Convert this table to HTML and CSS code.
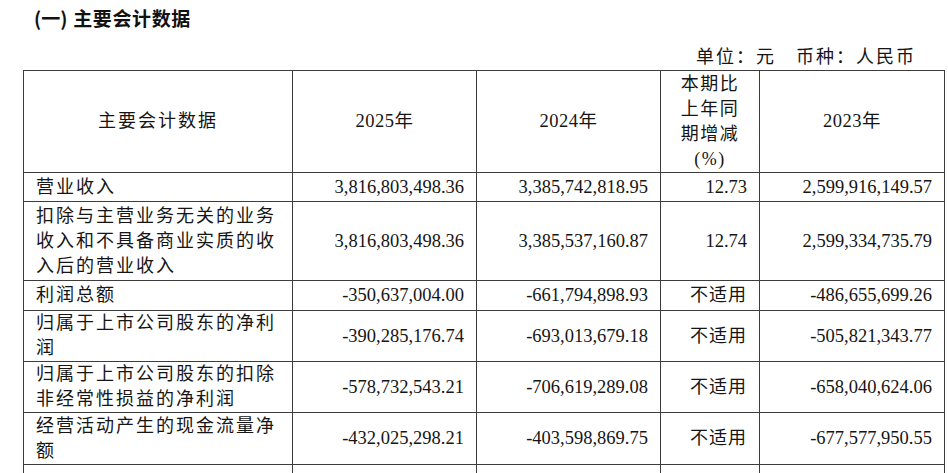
FILE: index.html
```html
<!DOCTYPE html>
<html lang="zh-CN">
<head>
<meta charset="utf-8">
<title>主要会计数据</title>
<link rel="stylesheet" href="styles.css">
</head>
<body>
<div class="page">
  <h2 class="title"><span class="paren">(一)</span> 主要会计数据</h2>
  <div class="unit">单位：元　币种：人民币</div>
  <table class="data">
    <colgroup>
      <col class="c-name">
      <col class="c-num">
      <col class="c-num">
      <col class="c-pct">
      <col class="c-num2">
    </colgroup>
    <thead>
      <tr class="head">
        <th class="zh">主要会计数据</th>
        <th>2025年</th>
        <th>2024年</th>
        <th class="pct-head">本期比<br>上年同<br>期增减<br>(%)</th>
        <th>2023年</th>
      </tr>
    </thead>
    <tbody>
      <tr class="r28">
        <td class="name">营业收入</td>
        <td class="num">3,816,803,498.36</td>
        <td class="num">3,385,742,818.95</td>
        <td class="num">12.73</td>
        <td class="num">2,599,916,149.57</td>
      </tr>
      <tr class="r78">
        <td class="name">扣除与主营业务无关的业务收入和不具备商业实质的收入后的营业收入</td>
        <td class="num">3,816,803,498.36</td>
        <td class="num">3,385,537,160.87</td>
        <td class="num">12.74</td>
        <td class="num">2,599,334,735.79</td>
      </tr>
      <tr class="r29">
        <td class="name">利润总额</td>
        <td class="num">-350,637,004.00</td>
        <td class="num">-661,794,898.93</td>
        <td class="num na">不适用</td>
        <td class="num">-486,655,699.26</td>
      </tr>
      <tr class="r51">
        <td class="name">归属于上市公司股东的净利润</td>
        <td class="num">-390,285,176.74</td>
        <td class="num">-693,013,679.18</td>
        <td class="num na">不适用</td>
        <td class="num">-505,821,343.77</td>
      </tr>
      <tr class="r51">
        <td class="name">归属于上市公司股东的扣除非经常性损益的净利润</td>
        <td class="num">-578,732,543.21</td>
        <td class="num">-706,619,289.08</td>
        <td class="num na">不适用</td>
        <td class="num">-658,040,624.06</td>
      </tr>
      <tr class="r52">
        <td class="name">经营活动产生的现金流量净额</td>
        <td class="num">-432,025,298.21</td>
        <td class="num">-403,598,869.75</td>
        <td class="num na">不适用</td>
        <td class="num">-677,577,950.55</td>
      </tr>
      <tr class="r52">
        <td class="name"></td>
        <td class="num"></td>
        <td class="num"></td>
        <td class="num"></td>
        <td class="num"></td>
      </tr>
    </tbody>
  </table>
</div>
</body>
</html>
```

FILE: styles.css
```css
html, body {
  margin: 0;
  padding: 0;
  background: #ffffff;
}

body {
  color: #151515;
  font-family: "Liberation Serif", "Noto Sans CJK SC", serif;
}

.page {
  padding-left: 23px;
  width: 922px;
}

.title {
  margin: 0;
  padding: 5px 0 0 11px;
  font-family: "Liberation Sans", "Noto Sans CJK SC", sans-serif;
  font-size: 19px;
  font-weight: bold;
  line-height: 26px;
  letter-spacing: 0.6px;
  color: #111;
}

.title .paren {
  font-family: "Noto Sans CJK SC", sans-serif;
  letter-spacing: 0;
}

.unit {
  margin-top: 11px;
  padding-right: 29px;
  text-align: right;
  font-size: 18px;
  line-height: 26px;
  letter-spacing: 2px;
}

.data {
  border-collapse: collapse;
  table-layout: fixed;
  width: 922px;
}

.c-name { width: 269px; }
.c-num { width: 184px; }
.c-pct { width: 99px; }
.c-num2 { width: 185px; }

.data th,
.data td {
  border: 1px solid #3c3c3c;
  padding: 0 12px;
  font-size: 18.5px;
  line-height: 25px;
  vertical-align: middle;
  font-weight: normal;
}

.data th {
  text-align: center;
  letter-spacing: 0.5px;
}

.data th.zh {
  letter-spacing: 2px;
  font-size: 18px;
}

.head th {
  height: 101px;
}

.data th.pct-head {
  font-size: 18px;
  letter-spacing: 1.5px;
  white-space: nowrap;
}

.data td.name {
  text-align: left;
  font-size: 18px;
  letter-spacing: 2px;
}

.num {
  text-align: right;
  white-space: nowrap;
}

.data td.na {
  font-size: 18px;
  letter-spacing: 1px;
}

.r28 td { height: 28px; }
.r29 td { height: 29px; }
.r51 td { height: 50px; }
.r52 td { height: 51px; }
.r78 td { height: 78px; }
```
